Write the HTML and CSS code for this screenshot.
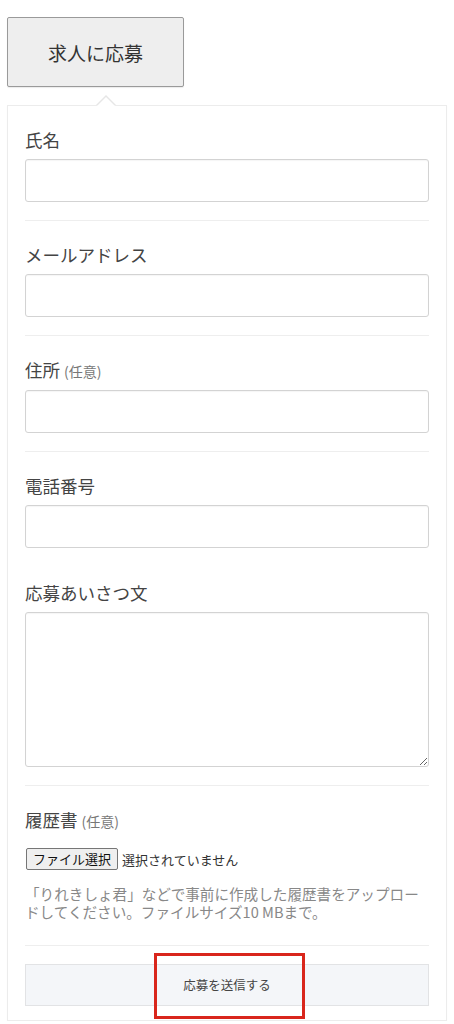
FILE: index.html
```html
<!DOCTYPE html>
<html lang="ja">
<head>
<meta charset="utf-8">
<link rel="stylesheet" href="styles.css">
</head>
<body>
<div class="page">
  <button class="apply-toggle" type="button">求人に応募</button>
  <form class="panel">
    <div class="field">
      <label class="label">氏名</label>
      <input class="input" type="text">
    </div>
    <div class="field">
      <label class="label">メールアドレス</label>
      <input class="input" type="text">
    </div>
    <div class="field">
      <label class="label">住所 <span class="opt">(任意)</span></label>
      <input class="input" type="text">
    </div>
    <div class="field field-cut">
      <label class="label">電話番号</label>
      <input class="input" type="text">
    </div>
    <div class="field field-resume">
      <label class="label">応募あいさつ文</label>
      <textarea class="textarea"></textarea>
    </div>
    <div class="field">
      <label class="label">履歴書 <span class="opt">(任意)</span></label>
      <div class="file-row">
        <span class="file-btn">ファイル選択</span>
        <span class="file-none">選択されていません</span>
      </div>
      <p class="help">「りれきしょ君」などで事前に作成した履歴書をアップロードしてください。ファイルサイズ10 MBまで。</p>
    </div>
    <div class="submit-wrap">
      <div class="submit">応募を送信する</div>
      <div class="highlight"></div>
    </div>
  </form>
</div>
</body>
</html>
```

FILE: styles.css
```css
* { box-sizing: border-box; }
html, body { margin: 0; padding: 0; background: #fff; }
body {
  font-family: "Noto Sans CJK JP", "Noto Sans", sans-serif;
  color: #444;
}
.page {
  padding: 17px 7px 0 7px;
}
.apply-toggle {
  display: block;
  width: 177px;
  height: 70px;
  margin: 0;
  padding: 0;
  background: #eeeeee;
  border: 1px solid #9a9a9a;
  border-radius: 2px;
  font-family: inherit;
  font-size: 19px;
  color: #333;
  box-shadow: 0 1px 1px rgba(0,0,0,0.08);
}
.panel {
  position: relative;
  margin-top: 18px;
  border: 1px solid #ececec;
  padding: 0 17px 14px 17px;
  background: #fff;
  box-shadow: 0 1px 1px rgba(0,0,0,0.04);
}
.panel::before,
.panel::after {
  content: "";
  position: absolute;
  width: 0;
  height: 0;
  border-style: solid;
  border-color: transparent;
}
.panel::before {
  left: 88px;
  top: -11px;
  border-width: 0 10px 10px 10px;
  border-bottom-color: #e6e6e6;
}
.panel::after {
  left: 89px;
  top: -9px;
  border-width: 0 9px 9px 9px;
  border-bottom-color: #fff;
}
.field {
  padding: 22px 0 18px 0;
  border-bottom: 1px solid #eeeeee;
}
.field-cut {
  border-bottom: none;
  padding-bottom: 13px;
}
.field-resume {
  padding-top: 20px;
}
.label {
  display: block;
  font-size: 17.5px;
  line-height: 24px;
  color: #444;
  margin-bottom: 7px;
}
.opt {
  font-size: 14px;
  color: #777;
}
.input {
  display: block;
  width: 100%;
  height: 43px;
  margin: 0;
  border: 1px solid #d3d3d3;
  border-radius: 3px;
  background: #fff;
  box-shadow: inset 0 1px 1px rgba(0,0,0,0.04);
}
.textarea {
  display: block;
  width: 100%;
  height: 155px;
  margin: 0;
  border: 1px solid #d3d3d3;
  border-radius: 3px;
  background: #fff;
  resize: vertical;
  box-shadow: inset 0 1px 1px rgba(0,0,0,0.04);
}
.file-row {
  display: flex;
  align-items: center;
  gap: 4px;
  margin-top: 15px;
  margin-left: 1px;
}
.file-btn {
  display: inline-block;
  height: 22px;
  line-height: 20px;
  padding: 0 6px;
  font-size: 13px;
  color: #111;
  background: #efefef;
  border: 1px solid #767676;
  border-radius: 2px;
}
.file-none {
  font-size: 13px;
  color: #333;
}
.help {
  margin: 15px 0 6px 0;
  font-size: 14.6px;
  line-height: 18px;
  color: #888;
}
.submit-wrap {
  position: relative;
  padding-top: 18px;
}
.submit {
  height: 42px;
  line-height: 40px;
  text-align: center;
  font-size: 12.5px;
  color: #444;
  background: #f4f6f9;
  border: 1px solid #e2e3e5;
}
.highlight {
  position: absolute;
  left: 129px;
  top: 7px;
  width: 151px;
  height: 66px;
  border: 3px solid #d9261c;
}
```
